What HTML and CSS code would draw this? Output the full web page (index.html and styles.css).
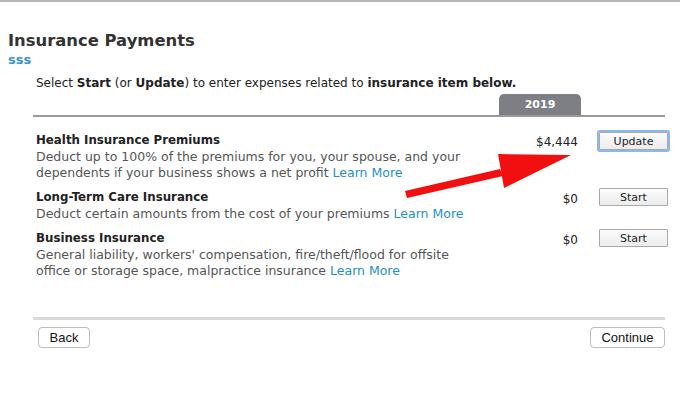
FILE: index.html
```html
<!DOCTYPE html>
<html>
<head>
<meta charset="utf-8">
<link rel="stylesheet" href="styles.css">
</head>
<body>
<div class="page">
  <h1 class="title">Insurance Payments</h1>
  <div class="sub">sss</div>
  <div class="main">
    <p class="intro">Select <b>Start</b> (or <b>Update</b>) to enter expenses related to <b>insurance item below.</b></p>
    <div class="tabbar"><div class="tab">2019</div></div>
    <div class="rows">
      <div class="row">
        <div class="desc">
          <div class="name">Health Insurance Premiums</div>
          <div class="text">Deduct up to 100% of the premiums for you, your spouse, and your dependents if your business shows a net profit <a class="link">Learn More</a></div>
        </div>
        <div class="amt">$4,444</div>
        <div class="act"><button class="btn focus">Update</button></div>
      </div>
      <div class="row">
        <div class="desc">
          <div class="name">Long-Term Care Insurance</div>
          <div class="text">Deduct certain amounts from the cost of your premiums <a class="link">Learn More</a></div>
        </div>
        <div class="amt">$0</div>
        <div class="act"><button class="btn">Start</button></div>
      </div>
      <div class="row">
        <div class="desc">
          <div class="name">Business Insurance</div>
          <div class="text">General liability, workers' compensation, fire/theft/flood for offsite office or storage space, malpractice insurance <a class="link">Learn More</a></div>
        </div>
        <div class="amt">$0</div>
        <div class="act"><button class="btn">Start</button></div>
      </div>
    </div>
    <div class="footer">
      <button class="nav">Back</button>
      <button class="nav">Continue</button>
    </div>
  </div>
  <svg class="arrow" width="680" height="401" viewBox="0 0 680 401">
    <polygon points="405,191 500,169 503,176 407,198" fill="#f20f0f"/>
    <polygon points="498,154 571,155 504,188" fill="#f20f0f"/>
  </svg>
</div>
</body>
</html>
```
FILE: styles.css
```css
* { box-sizing: border-box; }
html, body { margin: 0; padding: 0; background: #fff; }
body {
  font-family: "DejaVu Sans", Verdana, sans-serif;
  color: #333;
  width: 680px;
  height: 401px;
  overflow: hidden;
}
.page {
  position: relative;
  border-top: 2px solid #b5b5b5;
  height: 401px;
}
.title {
  margin: 28px 0 0 8px;
  font-size: 16.4px;
  line-height: 22px;
  font-weight: bold;
  color: #333;
}
.sub {
  margin: 0 0 0 8px;
  font-size: 13px;
  line-height: 16px;
  font-weight: bold;
  color: #3d8fd0;
}
.main {
  margin-left: 33px;
  width: 632px;
}
.intro {
  margin: 7px 0 0 3px;
  font-size: 12px;
  line-height: 16px;
  color: #222;
}
.intro b { color: #222; }
.tabbar {
  margin-top: 3px;
  display: flex;
  justify-content: flex-end;
  padding-right: 84px;
  border-bottom: 2px solid #9a9a9a;
}
.tab {
  width: 82px;
  height: 21px;
  background: #7d7f84;
  color: #fff;
  border-radius: 5px 5px 0 0;
  font-size: 11px;
  font-weight: bold;
  line-height: 21px;
  text-align: center;
}
.rows {
  padding: 15px 0 0 3px;
  display: flex;
  flex-direction: column;
  gap: 8px;
}
.row {
  display: grid;
  grid-template-columns: 1fr 110px 70px;
  align-items: start;
}
.name {
  font-size: 11.8px;
  line-height: 16px;
  font-weight: bold;
  color: #222;
}
.text {
  margin-top: 1px;
  font-size: 12.5px;
  line-height: 16px;
  color: #555;
  max-width: 432px;
}
.link { color: #1f8fc7; }
.amt {
  font-size: 12px;
  line-height: 16px;
  text-align: right;
  color: #222;
  padding-right: 17px;
  padding-top: 2px;
}
.act { display: flex; justify-content: flex-end; margin-right: -3px; }
.btn {
  font-family: "DejaVu Sans", Verdana, sans-serif;
  font-size: 11px;
  color: #222;
  width: 69px;
  height: 18px;
  padding: 0;
  border: 1px solid #a9a9a9;
  background: linear-gradient(#fbfbfb, #ececec);
  border-radius: 1px;
}
.btn.focus {
  box-shadow: 0 0 0 2px #8bb9ec;
  margin-top: 0;
}
.row + .row .btn { margin-top: -1px; }
.footer {
  margin-top: 38px;
  border-top: 3px solid #dadada;
  padding: 7px 0 0 5px;
  display: flex;
  justify-content: space-between;
}
.nav {
  font-family: "Liberation Sans", Arial, sans-serif;
  font-size: 13px;
  color: #111;
  background: #fff;
  border: 1px solid #bdbdbd;
  border-radius: 4px;
  height: 21px;
  padding: 0;
}
.footer .nav:first-child { width: 52px; }
.footer .nav:last-child { width: 75px; }
.arrow {
  position: absolute;
  left: 0;
  top: -2px;
  pointer-events: none;
}
```
